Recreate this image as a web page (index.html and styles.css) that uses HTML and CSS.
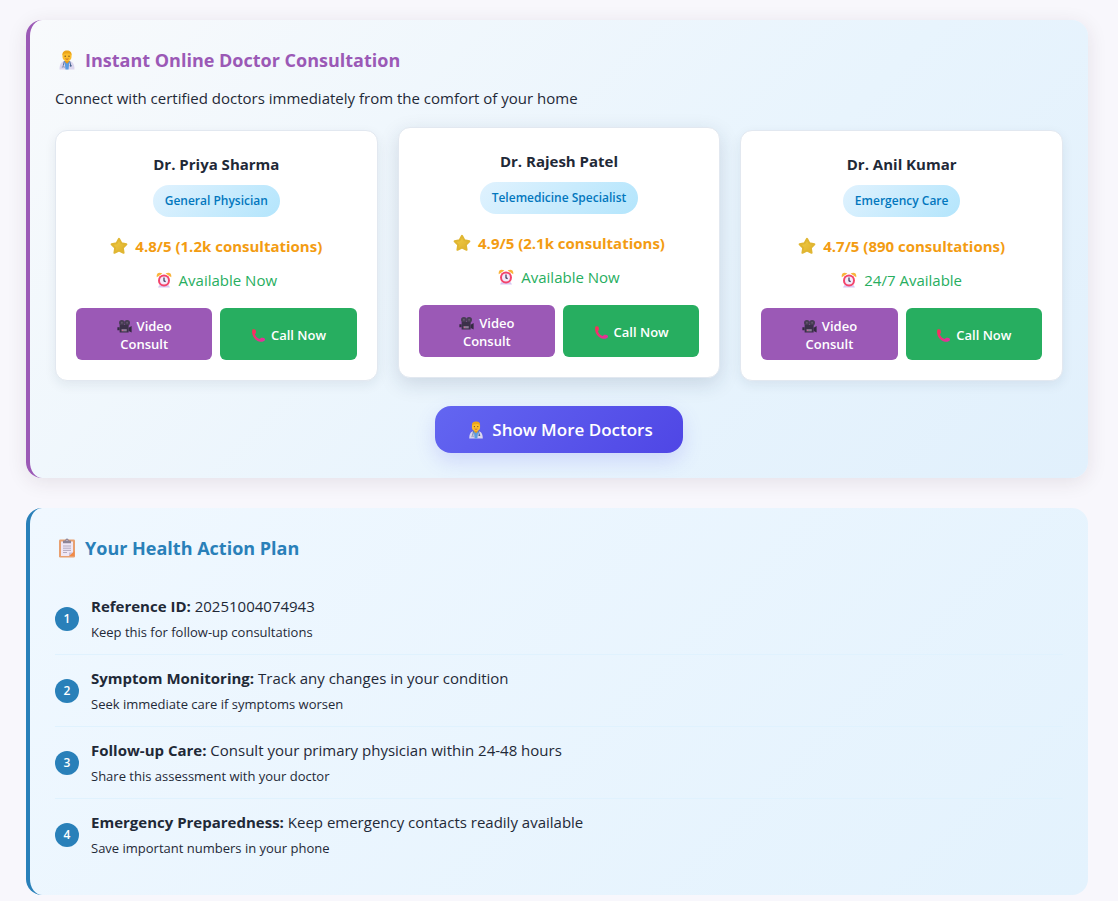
FILE: index.html
```html
<!DOCTYPE html>
<html lang="en">
<head>
<meta charset="utf-8">
<meta name="viewport" content="width=device-width, initial-scale=1">
<title>Health Assessment</title>
<link rel="stylesheet" href="styles.css">
</head>
<body>
<svg class="sprite" aria-hidden="true">
  <defs>
    <linearGradient id="star-fill" x1="0" y1="0" x2="1" y2="1">
      <stop offset="0" stop-color="#f3cf45"/><stop offset="1" stop-color="#dcae2c"/>
    </linearGradient>
    <linearGradient id="phone-fill" x1="0" y1="0" x2="1" y2="1">
      <stop offset="0" stop-color="#ff2d4e"/><stop offset="1" stop-color="#d836a8"/>
    </linearGradient>
    <symbol id="doctor" viewBox="0 0 20 20">
      <path d="M2.500 19.500c0-5 1.600-8.200 5.500-8.500h4c3.900.3 5.500 3.500 5.500 8.500z" fill="#dcd6ee"/>
      <path d="M7.500 11h5l-1 8.500h-3z" fill="#5b9be0"/>
      <path d="M8 9.500h4v2.200l-2 2-2-2z" fill="#e89a1c"/>
      <path d="M7.300 11.200 6.400 15.500M12.700 11.200l1 4" stroke="#4c6c9c" stroke-width="1" fill="none"/>
      <circle cx="13.700" cy="15.700" r="1" fill="#47638e"/>
      <path d="M6.200 15v2.500M5.300 18v-1.500h2V18" stroke="#8c96b8" stroke-width=".7" fill="none"/>
      <rect x="5.500" y="1" width="9" height="10.200" rx="4.200" fill="#fbbd2c"/>
      <path d="M5.500 5.500C5.200 2 7 .5 10 .5s5 1.500 4.500 5C13.500 3.500 12 3.200 10 3.500c-2 0-3.700.2-4.500 2z" fill="#eba51a"/>
      <circle cx="8.200" cy="6.200" r=".7" fill="#6d4a20"/><circle cx="12" cy="6.200" r=".7" fill="#6d4a20"/>
      <path d="M8.500 8.800q1.500 1 3 0" stroke="#bc5724" stroke-width=".8" fill="none"/>
    </symbol>
    <symbol id="clipboard" viewBox="0 0 20 20">
      <rect x="2" y="1.500" width="16" height="18" rx="1.200" fill="#e8a070"/>
      <path d="M4 3.500h12v11l-4 3.500H4z" fill="#efe7f6"/>
      <path d="M12 18v-3.500h4z" fill="#c9bfd9"/>
      <path d="M16 14.500 12 18h5.500v-5z" fill="#f18a48"/>
      <path d="M6 8h8M6 10.200h8M6 12.400h8M6 14.500h4" stroke="#aaa2b8" stroke-width=".9"/>
      <path d="M6 5.300V3.200q0-.7.7-.7h1.500q.2-2 1.800-2t1.800 2h1.500q.7 0 .7.700v2.100z" fill="#8d8496"/>
      <circle cx="10" cy="2.300" r=".6" fill="#e3dae9"/>
    </symbol>
    <symbol id="star" viewBox="0 0 20 20">
      <path d="M10 2 12.700 7l5.500 1-3.900 4.100.8 5.500L10 15.200l-5.100 2.400.8-5.500L1.800 8l5.500-1z" fill="url(#star-fill)" stroke="#e0b632" stroke-width="2.200" stroke-linejoin="round"/>
    </symbol>
    <symbol id="clock" viewBox="0 0 20 20">
      <path d="M4 16.500h12l1.500 3h-15z" fill="#d9c8f2"/>
      <path d="M1 6.500C0 2 3.500-.5 8 2zM19 6.500c1-4.500-2.500-7-7-4.500z" fill="#f9b43c"/>
      <circle cx="10" cy="10.500" r="7.500" fill="#f3446c"/>
      <circle cx="10" cy="10.500" r="5" fill="#f3ebfb"/>
      <path d="M10 7v4l2 1" stroke="#3f3357" stroke-width="1.500" fill="none"/>
    </symbol>
    <symbol id="camera" viewBox="0 0 20 20">
      <circle cx="6.500" cy="5" r="3.800" fill="#473c54"/><circle cx="13.500" cy="5" r="3.800" fill="#473c54"/>
      <circle cx="6.500" cy="5" r="1.300" fill="#65576f"/><circle cx="13.500" cy="5" r="1.300" fill="#65576f"/>
      <path d="M3.500 8h12v10h-12z" fill="#3b3049"/>
      <path d="M3.500 11H.5v4h3zM15.500 11.500l4-2.200v8.700l-4-2z" fill="#332a40"/>
      <path d="M6 13.500h7v3H6z" fill="#8b7b96"/><circle cx="7.500" cy="15" r=".8" fill="#f0508d"/>
    </symbol>
    <symbol id="phone" viewBox="0 0 20 20">
      <path d="M2.200 1.500 5.500 2c1 .8 1.500 4 .8 5L5.200 8.200c.8 3 3.300 5.500 6.400 6.500l1.300-1.200c1.200-.8 4.800-.1 5.600 1l.2 1.600c-1.600 2.900-7 3.300-11.400.3C2.500 13 .2 6 2.200 1.500z" fill="url(#phone-fill)"/>
    </symbol>
  </defs>
</svg>

<main class="page">
  <section class="panel panel-consult">
    <h2 class="panel-title"><svg class="icon icon-lg" aria-hidden="true"><use href="#doctor"/></svg>Instant Online Doctor Consultation</h2>
    <p class="panel-intro">Connect with certified doctors immediately from the comfort of your home</p>
    <div class="doctor-grid">
      <article class="doctor-card">
        <h3 class="doctor-name">Dr. Priya Sharma</h3>
        <span class="specialty">General Physician</span>
        <div class="rating"><svg class="icon" aria-hidden="true"><use href="#star"/></svg>4.8/5 (1.2k consultations)</div>
        <div class="availability"><svg class="icon icon-sm" aria-hidden="true"><use href="#clock"/></svg>Available Now</div>
        <div class="actions">
          <button class="action action-video" type="button"><svg class="icon-inline" aria-hidden="true"><use href="#camera"/></svg>Video Consult</button>
          <button class="action action-call" type="button"><svg class="icon-inline" aria-hidden="true"><use href="#phone"/></svg>Call Now</button>
        </div>
      </article>
      <article class="doctor-card is-raised">
        <h3 class="doctor-name">Dr. Rajesh Patel</h3>
        <span class="specialty">Telemedicine Specialist</span>
        <div class="rating"><svg class="icon" aria-hidden="true"><use href="#star"/></svg>4.9/5 (2.1k consultations)</div>
        <div class="availability"><svg class="icon icon-sm" aria-hidden="true"><use href="#clock"/></svg>Available Now</div>
        <div class="actions">
          <button class="action action-video" type="button"><svg class="icon-inline" aria-hidden="true"><use href="#camera"/></svg>Video Consult</button>
          <button class="action action-call" type="button"><svg class="icon-inline" aria-hidden="true"><use href="#phone"/></svg>Call Now</button>
        </div>
      </article>
      <article class="doctor-card">
        <h3 class="doctor-name">Dr. Anil Kumar</h3>
        <span class="specialty">Emergency Care</span>
        <div class="rating"><svg class="icon" aria-hidden="true"><use href="#star"/></svg>4.7/5 (890 consultations)</div>
        <div class="availability"><svg class="icon icon-sm" aria-hidden="true"><use href="#clock"/></svg>24/7 Available</div>
        <div class="actions">
          <button class="action action-video" type="button"><svg class="icon-inline" aria-hidden="true"><use href="#camera"/></svg>Video Consult</button>
          <button class="action action-call" type="button"><svg class="icon-inline" aria-hidden="true"><use href="#phone"/></svg>Call Now</button>
        </div>
      </article>
    </div>
    <div class="more"><button class="more-button" type="button"><svg class="icon" aria-hidden="true"><use href="#doctor"/></svg>Show More Doctors</button></div>
  </section>

  <section class="panel panel-plan">
    <h2 class="panel-title"><svg class="icon icon-lg" aria-hidden="true"><use href="#clipboard"/></svg>Your Health Action Plan</h2>
    <ol class="steps">
      <li class="step"><span class="step-number">1</span><div><p class="step-title"><strong>Reference ID:</strong> 20251004074943</p><p class="step-note">Keep this for follow-up consultations</p></div></li>
      <li class="step"><span class="step-number">2</span><div><p class="step-title"><strong>Symptom Monitoring:</strong> Track any changes in your condition</p><p class="step-note">Seek immediate care if symptoms worsen</p></div></li>
      <li class="step"><span class="step-number">3</span><div><p class="step-title"><strong>Follow-up Care:</strong> Consult your primary physician within 24-48 hours</p><p class="step-note">Share this assessment with your doctor</p></div></li>
      <li class="step"><span class="step-number">4</span><div><p class="step-title"><strong>Emergency Preparedness:</strong> Keep emergency contacts readily available</p><p class="step-note">Save important numbers in your phone</p></div></li>
    </ol>
  </section>
</main>
</body>
</html>
```
FILE: styles.css
```css
* {
  box-sizing: border-box;
  margin: 0;
  padding: 0;
}

body {
  background: #f8f7fc;
  color: #1f2937;
  font-family: "Segoe UI", "Open Sans", "Noto Sans", sans-serif;
  font-size: 15px;
  line-height: 26px;
}

.sprite {
  position: absolute;
  width: 0;
  height: 0;
}

.page {
  display: flex;
  flex-direction: column;
  gap: 30px;
  padding: 20px 30px 6px 26px;
}

.panel {
  border-left: 4px solid;
  border-radius: 16px;
  padding: 25px;
}

.panel-consult {
  border-left-color: #9b59b6;
  background: linear-gradient(135deg, #f8fafc 0%, #e8f4fd 60%, #e1f0fc 100%);
  box-shadow: 0 4px 20px rgba(60, 30, 50, 0.1);
}

.panel-plan {
  border-left-color: #2980b9;
  background: linear-gradient(135deg, #f0f8ff 0%, #e3f2fd 100%);
}

.panel-title {
  display: flex;
  align-items: center;
  gap: 6px;
  font-size: 18px;
  font-weight: 700;
  line-height: 30px;
}

.panel-consult .panel-title {
  color: #9b59b6;
}

.panel-plan .panel-title {
  color: #2980b9;
}

.icon {
  width: 18px;
  height: 18px;
  flex: none;
}

.icon-sm {
  width: 16px;
  height: 16px;
}

.icon-lg {
  width: 24px;
  height: 20px;
}

.panel-intro {
  margin-top: 10px;
}

.doctor-grid {
  display: grid;
  grid-template-columns: repeat(3, 1fr);
  gap: 20px;
  margin-top: 19px;
}

.doctor-card {
  display: flex;
  flex-direction: column;
  align-items: center;
  padding: 20px;
  border: 1px solid #e2e8f0;
  border-radius: 12px;
  background: #fff;
  box-shadow: 0 4px 12px rgba(30, 50, 80, 0.08);
}

.doctor-card.is-raised,
.doctor-card:hover {
  transform: translateY(-3px);
  box-shadow: 0 6px 20px rgba(30, 50, 80, 0.15);
}

.doctor-name {
  font-size: 15px;
  font-weight: 700;
}

.specialty {
  margin-top: 8px;
  padding: 3px 12px;
  border-radius: 16px;
  background: linear-gradient(135deg, #e0f2fe, #b3e5fc);
  color: #0277bd;
  font-size: 12px;
  font-weight: 600;
}

.rating,
.availability {
  display: flex;
  align-items: center;
  gap: 7px;
}

.rating {
  margin-top: 16px;
  color: #f39c12;
  font-weight: 700;
}

.availability {
  margin-top: 8px;
  color: #27ae60;
}

.actions {
  display: grid;
  grid-template-columns: 1fr 1fr;
  gap: 8px;
  width: 100%;
  margin-top: 15px;
}

.action {
  padding: 9px 12px 7px;
  border: 0;
  border-radius: 6px;
  color: #fff;
  font: 600 13px/18px "Segoe UI", "Open Sans", "Noto Sans", sans-serif;
  cursor: pointer;
}

.action-video {
  padding-right: 30px;
  padding-left: 30px;
  background: #9b59b6;
}

.action-call {
  background: #27ae60;
}

.icon-inline {
  width: 15px;
  height: 15px;
  margin-right: 5px;
  vertical-align: -3px;
}

.more {
  display: flex;
  justify-content: center;
  margin-top: 25px;
}

.more-button {
  display: flex;
  align-items: center;
  gap: 7px;
  padding: 11px 30px 10px 32px;
  border: 0;
  border-radius: 16px;
  background: linear-gradient(135deg, #6366f1, #4f46e5);
  box-shadow: 0 8px 20px rgba(99, 102, 241, 0.2);
  color: #fff;
  font: 600 17px/26px "Segoe UI", "Open Sans", "Noto Sans", sans-serif;
  cursor: pointer;
}

.steps {
  margin-top: 20px;
  list-style: none;
}

.step {
  display: flex;
  align-items: center;
  gap: 12px;
  padding: 10px 0 9px;
  border-bottom: 1px solid #e0f2fe;
}

.step:last-child {
  border-bottom: 0;
}

.step-number {
  display: grid;
  place-items: center;
  flex: none;
  width: 24px;
  height: 24px;
  border-radius: 50%;
  background: #2980b9;
  color: #fff;
  font-size: 12px;
  font-weight: 600;
  line-height: 24px;
}

.step-note {
  font-size: 13px;
}
```
